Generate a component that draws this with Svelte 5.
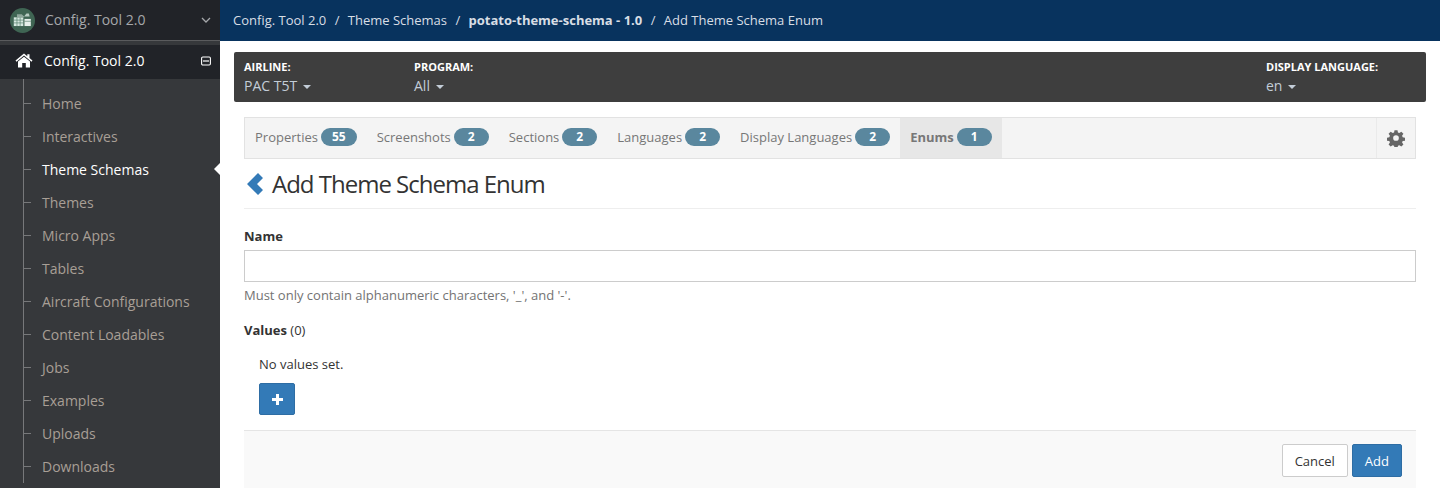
<script>
	const menu = [
		'Home',
		'Interactives',
		'Theme Schemas',
		'Themes',
		'Micro Apps',
		'Tables',
		'Aircraft Configurations',
		'Content Loadables',
		'Jobs',
		'Examples',
		'Uploads',
		'Downloads',
	]

	const tabs = [
		{ name: 'Properties', count: 55 },
		{ name: 'Screenshots', count: 2 },
		{ name: 'Sections', count: 2 },
		{ name: 'Languages', count: 2 },
		{ name: 'Display Languages', count: 2 },
		{ name: 'Enums', count: 1, active: true },
	]

	const filters = [
		{ label: 'AIRLINE:', value: 'PAC T5T' },
		{ label: 'PROGRAM:', value: 'All' },
	]
</script>


<div class="page">
	<aside>
		<div class="brand">
			<span class="logo">
				<svg viewBox="0 0 24 24" width="24" height="24">
					<rect x="1" y="8" width="12" height="11" fill="#d5e8df" />
					<path d="M1 11.500h12M1 15h12M5 8v11M9 8v11" stroke="#4f7a66" stroke-width="0.8" />
					<path d="M5 8V4h6l3 3v1z" fill="#8fa79c" />
					<rect x="14.500" y="10" width="8" height="9" fill="#e6efea" />
					<path d="M14.500 13h8" stroke="#4f7a66" stroke-width="0.8" />
					<path d="M14 7l3-4h3l1 4z" fill="#b8cbc2" />
				</svg>
			</span>
			<span class="brand-name">Config. Tool 2.0</span>
			<svg class="chevron" viewBox="0 0 10 6" width="10" height="6">
				<path d="M1 1l4 4 4-4" fill="none" stroke="#a5a7aa" stroke-width="1.3" />
			</svg>
		</div>

		<div class="section">
			<svg class="home" viewBox="0 0 18 15" width="18" height="15">
				<path d="M9 0.500L0.500 7.600l1 1.100L9 2.500l7.500 6.200 1-1.100L14.500 5V1.200h-2.200v2z" fill="#fff" />
				<path d="M9 3.700L3 8.600V14.500h4.200V10h3.600v4.500H15V8.600z" fill="#fff" />
			</svg>
			<span class="section-name">Config. Tool 2.0</span>
			<svg class="collapse" viewBox="0 0 10 10" width="10" height="10">
				<rect x="0.600" y="1" width="8.800" height="8" rx="1.200" fill="none" stroke="#fff" stroke-width="1.100" />
				<path d="M2 5h6" stroke="#fff" stroke-width="1.200" />
			</svg>
		</div>

		<ul>
			{#each menu as item}
				<li class:current={item === 'Theme Schemas'}>{item}</li>
			{/each}
		</ul>
	</aside>

	<main>
		<nav class="crumbs">
			<span>Config. Tool 2.0</span>
			<i>/</i>
			<span>Theme Schemas</span>
			<i>/</i>
			<b>potato-theme-schema - 1.0</b>
			<i>/</i>
			<span>Add Theme Schema Enum</span>
		</nav>

		<div class="content">
			<div class="filters">
				{#each filters as filter}
					<div class="filter">
						<label>{filter.label}</label>
						<span>{filter.value}<em></em></span>
					</div>
				{/each}
				<div class="filter language">
					<label>DISPLAY LANGUAGE:</label>
					<span>en<em></em></span>
				</div>
			</div>

			<div class="inner">
				<div class="tabs">
					{#each tabs as tab}
						<div class="tab" class:active={tab.active}>
							{tab.name}
							<span class="badge">{tab.count}</span>
						</div>
					{/each}
					<div class="settings">
						<svg viewBox="0 0 24 24" width="18" height="18">
							<path fill="#666" fill-rule="evenodd" d="M10 1.500h4l.6 3.100 1.800.8 2.700-1.800 2.800 2.800-1.800 2.700.8 1.800 3.100.6v4l-3.100.6-.8 1.800 1.800 2.700-2.800 2.800-2.700-1.800-1.800.8-.6 3.100h-4l-.6-3.100-1.800-.8-2.700 1.800-2.800-2.800 1.800-2.700-.8-1.800-3.100-.6v-4l3.100-.6.8-1.800-1.800-2.700 2.800-2.800 2.700 1.800 1.800-.8zM12 8.200a3.800 3.800 0 1 0 0 7.600 3.800 3.800 0 0 0 0-7.600z" />
						</svg>
					</div>
				</div>

				<h1>
					<svg viewBox="0 0 16 22" width="16" height="22">
						<path d="M0 11L11 0l5 5-6 6 6 6-5 5z" fill="#337ab7" />
					</svg>
					Add Theme Schema Enum
				</h1>

				<div class="field">
					<label for="name">Name</label>
					<input id="name" type="text" />
					<p>Must only contain alphanumeric characters, '_', and '-'.</p>
				</div>

				<div class="values">
					<div class="values-title"><b>Values</b> (0)</div>
					<div class="values-body">
						<p>No values set.</p>
						<button class="primary plus" aria-label="Add value">
							<svg viewBox="0 0 11 11" width="11" height="11">
								<path d="M5.500 0v11M0 5.500h11" stroke="#fff" stroke-width="3" />
							</svg>
						</button>
					</div>
				</div>

				<footer>
					<button class="cancel">Cancel</button>
					<button class="primary">Add</button>
				</footer>
			</div>
		</div>
	</main>
</div>


<style>
	:global(body) {
		margin: 0;
		font-family: "Open Sans", sans-serif;
		font-size: 13px;
		color: #333;
		background: #fff;
	}

	.page {
		display: flex;
		height: 488px;
		overflow: hidden;
	}

	aside {
		width: 220px;
		flex: none;
		background: #36383b;
	}

	.brand {
		height: 40px;
		display: flex;
		align-items: center;
		padding: 0 8px 0 10px;
		background: #212328;
		border-bottom: 1px solid #5a5b5d;
	}

	.logo {
		width: 25px;
		height: 25px;
		border-radius: 50%;
		background: #3f6553;
		display: flex;
		align-items: center;
		justify-content: center;
		flex: none;
	}

	.logo svg {
		width: 19px;
		height: 19px;
	}

	.brand-name {
		margin-left: 10px;
		font-size: 14px;
		color: #a5a7aa;
		flex: 1;
		padding-bottom: 1px;
	}

	.chevron {
		margin-right: 1px;
	}

	.section {
		height: 34px;
		margin-top: 4px;
		display: flex;
		align-items: center;
		padding: 0 9px 3px 15px;
		box-sizing: border-box;
		background: #212328;
		color: #fff;
	}

	.home {
		flex: none;
	}

	.section-name {
		margin-left: 11px;
		font-size: 14px;
		flex: 1;
	}

	ul {
		list-style: none;
		margin: 0;
		padding: 8px 0 0 23px;
		position: relative;
	}

	ul::before {
		content: '';
		position: absolute;
		left: 23px;
		top: 0;
		bottom: 0;
		width: 1px;
		background: #77787a;
	}

	li {
		height: 33px;
		line-height: 33px;
		padding-left: 19px;
		font-size: 14px;
		color: #a89f96;
		position: relative;
	}

	li::before {
		content: '';
		position: absolute;
		left: 0;
		top: 16px;
		width: 8px;
		height: 1px;
		background: #77787a;
	}

	li.current {
		color: #fff;
	}

	li.current::after {
		content: '';
		position: absolute;
		right: 0;
		top: 10px;
		border: 6px solid transparent;
		border-left: 0;
		border-right-color: #fff;
	}

	main {
		flex: 1;
		min-width: 0;
	}

	.crumbs {
		height: 41px;
		box-sizing: border-box;
		background: #08335e;
		color: #d8dee5;
		display: flex;
		align-items: center;
		padding: 0 0 2px 13px;
		font-size: 13px;
		white-space: nowrap;
	}

	.crumbs i {
		font-style: normal;
		margin: 0 8.400px;
	}

	.crumbs b {
		font-weight: 700;
	}

	.content {
		padding: 11px 14px 0;
	}

	.filters {
		height: 50px;
		box-sizing: border-box;
		background: #3e3e3e;
		border-radius: 2px;
		display: flex;
		padding: 8px 10px 0;
		color: #fff;
	}

	.filter {
		width: 170px;
	}

	.filter label {
		display: block;
		font-size: 11px;
		font-weight: 700;
		line-height: 14px;
	}

	.filter span {
		display: block;
		margin-top: 2px;
		font-size: 14px;
		line-height: 19px;
		color: #c3cdd8;
	}

	.filter em {
		display: inline-block;
		margin-left: 6px;
		vertical-align: middle;
		border: 4px solid transparent;
		border-bottom: 0;
		border-top-color: #c3cdd8;
	}

	.filter.language {
		width: 150px;
		margin-left: auto;
	}

	.inner {
		padding: 15px 10px 0;
	}

	.tabs {
		height: 42px;
		box-sizing: border-box;
		display: flex;
		align-items: stretch;
		background: #f4f4f4;
		border: 1px solid #e2e2e2;
	}

	.tab {
		display: flex;
		align-items: center;
		gap: 3px;
		padding: 0 10px 2px;
		font-size: 13px;
		color: #777;
		white-space: nowrap;
	}

	.tab.active {
		background: #e7e7e7;
		font-weight: 700;
	}

	.badge {
		min-width: 35px;
		box-sizing: border-box;
		height: 18px;
		line-height: 18px;
		padding: 0 11px;
		border-radius: 9px;
		background: #5a879e;
		color: #fff;
		font-size: 12px;
		font-weight: 700;
		text-align: center;
	}

	.settings {
		margin-left: auto;
		width: 38px;
		border-left: 1px solid #eaeaea;
		display: flex;
		align-items: center;
		justify-content: center;
		padding-bottom: 1px;
	}

	h1 {
		margin: 0;
		height: 50px;
		box-sizing: border-box;
		display: flex;
		align-items: center;
		gap: 9px;
		font-size: 24px;
		font-weight: 400;
		letter-spacing: -1px;
		color: #333;
		border-bottom: 1px solid #eee;
	}

	h1 svg {
		margin-left: 3px;
	}

	.field {
		margin-top: 18px;
	}

	.field label {
		display: block;
		font-weight: 700;
		line-height: 18px;
	}

	.field input {
		display: block;
		width: 100%;
		height: 32px;
		box-sizing: border-box;
		margin-top: 5px;
		border: 1px solid #ccc;
		background: #fff;
	}

	.field p {
		margin: 4px 0 0;
		font-size: 13px;
		line-height: 18px;
		color: #737373;
	}

	.values {
		margin-top: 17px;
	}

	.values-title {
		line-height: 18px;
	}

	.values-body {
		padding: 16px 15px 0;
	}

	.values-body p {
		margin: 0 0 10px;
		line-height: 18px;
	}

	button {
		font-family: inherit;
		font-size: 13px;
		border-radius: 2px;
		height: 33px;
		padding: 0 12px;
	}

	.primary {
		background: #337ab7;
		border: 1px solid #2e6da4;
		color: #fff;
	}

	.plus {
		width: 36px;
		height: 32px;
		padding: 0;
		display: flex;
		align-items: center;
		justify-content: center;
	}

	.cancel {
		background: #fff;
		border: 1px solid #ccc;
		color: #333;
	}

	footer {
		margin-top: 15px;
		height: 58px;
		box-sizing: border-box;
		border-top: 1px solid #e5e5e5;
		background: #f9f9f9;
		display: flex;
		justify-content: flex-end;
		align-items: flex-start;
		gap: 4px;
		padding: 13px 14px 0 0;
	}
</style>
